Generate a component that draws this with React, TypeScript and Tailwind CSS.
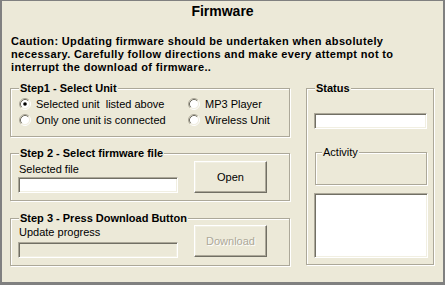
import React from "react";

const font = { fontFamily: '"Liberation Sans", Arial, sans-serif' };

// classic 3D edges
const sunken =
  "border border-t-[#ACA899] border-l-[#ACA899] border-r-white border-b-white shadow-[inset_1px_1px_0_#716F64,inset_-1px_-1px_0_#F1EFE2]";
const raised =
  "border border-t-white border-l-white border-r-[#716F64] border-b-[#716F64] shadow-[inset_-1px_-1px_0_#ACA899,inset_1px_1px_0_#F1EFE2]";
const etched =
  "relative border border-[#ACA899] shadow-[inset_1px_1px_0_#fff,1px_1px_0_#fff]";

const Radio = ({ checked }: { checked?: boolean }) => (
  <svg width="12" height="12" viewBox="0 0 12 12" className="shrink-0">
    <circle cx="6" cy="6" r="4.5" fill="#fff" />
    <path d="M2.11 9.89 A5.5 5.5 0 0 1 9.89 2.11" stroke="#ACA899" fill="none" />
    <path d="M9.89 2.11 A5.5 5.5 0 0 1 2.11 9.89" stroke="#fff" fill="none" />
    <path d="M2.82 9.18 A4.5 4.5 0 0 1 9.18 2.82" stroke="#716F64" fill="none" />
    <path d="M9.18 2.82 A4.5 4.5 0 0 1 2.82 9.18" stroke="#F1EFE2" fill="none" />
    {checked && <circle cx="6" cy="6" r="1.8" fill="#000" />}
  </svg>
);

const RadioOption = ({ label, checked }: { label: string; checked?: boolean }) => (
  <div className="flex items-center h-[16px] gap-[5px]">
    <Radio checked={checked} />
    <span className="whitespace-pre">{label}</span>
  </div>
);

const GroupTitle = ({ children, bold = true, left = "left-[8px]" }: { children: React.ReactNode; bold?: boolean; left?: string }) => (
  <span
    className={`absolute -top-[7px] ${left} px-[1px] bg-[#ECE9D8] leading-[13px] ${bold ? "font-bold" : ""}`}
  >
    {children}
  </span>
);

export default function App() {
  return (
    <div
      style={font}
      className="w-[445px] h-[285px] bg-[#ECE9D8] border-t border-l-2 border-r-2 border-b-[3px] border-[#808080] text-[11px] leading-[13px] text-black"
    >
      <div className="mt-[2px] h-[16px] leading-[16px] text-center text-[14px] font-bold">Firmware</div>

      <p className="mt-[16px] pl-[9px] font-bold tracking-[0.35px] whitespace-nowrap">
        Caution: Updating firmware should be undertaken when absolutely
        <br />
        necessary. Carefully follow directions and make every attempt not to
        <br />
        interrupt the download of firmware..
      </p>

      <div className="mt-[14px] pl-[8px] flex gap-[16px]">
        {/* left column */}
        <div className="flex flex-col w-[280px]">
          <div className={`${etched} h-[49px] pt-[7px] pl-[8px]`}>
            <GroupTitle>Step1 - Select Unit</GroupTitle>
            <div className="grid grid-cols-[169px_1fr]">
              <RadioOption label="Selected unit  listed above" checked />
              <RadioOption label="MP3 Player" />
              <RadioOption label="Only one unit is connected" />
              <RadioOption label="Wireless Unit" />
            </div>
          </div>

          <div className={`${etched} mt-[16px] h-[48px] flex gap-[16px] pl-[7px]`}>
            <GroupTitle>Step 2 - Select firmware file</GroupTitle>
            <div className="flex flex-col pt-[9px]">
              <span className="ml-[1px]">Selected file</span>
              <div className={`${sunken} mt-[1px] w-[160px] h-[16px] bg-white`} />
            </div>
            <button className={`${raised} mt-[7px] w-[73px] h-[32px] bg-[#ECE9D8] text-[11px]`}>
              Open
            </button>
          </div>

          <div className={`${etched} mt-[17px] h-[48px] flex gap-[16px] pl-[7px]`}>
            <GroupTitle>Step 3 - Press Download Button</GroupTitle>
            <div className="flex flex-col pt-[7px]">
              <span className="ml-[1px]">Update progress</span>
              <div className={`${sunken} mt-[3px] w-[160px] h-[16px] bg-[#ECE9D8]`} />
            </div>
            <button
              disabled
              className={`${raised} mt-[6px] w-[73px] h-[32px] bg-[#ECE9D8] text-[11px] text-[#ACA899] [text-shadow:1px_1px_0_#fff]`}
            >
              Download
            </button>
          </div>
        </div>

        {/* status column */}
        <div className={`${etched} w-[128px] h-[177px] pl-[7px] flex flex-col`}>
          <GroupTitle>Status</GroupTitle>
          <div className={`${sunken} mt-[24px] w-[113px] h-[16px] bg-white`} />
          <div className={`${etched} mt-[23px] ml-[1px] w-[112px] h-[33px]`}>
            <GroupTitle bold={false} left="left-[6px]">Activity</GroupTitle>
          </div>
          <div className={`${sunken} mt-[8px] w-[114px] h-[65px] bg-white`} />
        </div>
      </div>
    </div>
  );
}
